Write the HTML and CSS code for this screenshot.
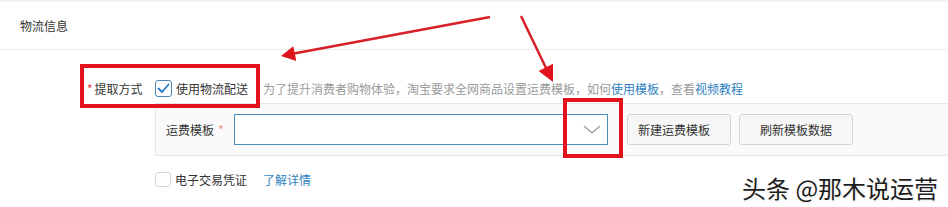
FILE: index.html
```html
<!DOCTYPE html>
<html lang="zh-CN">
<head>
<meta charset="utf-8">
<title>物流信息</title>
<link rel="stylesheet" href="styles.css">
</head>
<body>
<div class="page">
  <div class="topband"></div>
  <div class="section-head">物流信息</div>
  <div class="form">
    <div class="row row-method">
      <div class="label"><span class="req">*</span>提取方式</div>
      <label class="check">
        <span class="box box-checked">
          <svg width="13" height="11" viewBox="0 0 13 11"><path d="M1.5 5.5 L5 9 L11.5 1.5" fill="none" stroke="#2a78c2" stroke-width="1.8" stroke-linecap="round" stroke-linejoin="round"/></svg>
        </span>
        <span class="check-text">使用物流配送</span>
      </label>
      <span class="hint">为了提升消费者购物体验，淘宝要求全网商品设置运费模板，如何<a class="link">使用模板</a>，查看<a class="link">视频教程</a></span>
    </div>
    <div class="panel">
      <div class="panel-label">运费模板<span class="req req-light">*</span></div>
      <div class="select">
        <svg class="chevron" width="18" height="9" viewBox="0 0 18 9"><path d="M1 1 L9 8 L17 1" fill="none" stroke="#9a9a9a" stroke-width="1.3"/></svg>
      </div>
      <button class="btn btn-new">新建运费模板</button>
      <button class="btn btn-refresh">刷新模板数据</button>
    </div>
    <div class="row row-e">
      <label class="check">
        <span class="box box-empty"></span>
        <span class="check-text">电子交易凭证</span>
      </label>
      <a class="link link-more">了解详情</a>
    </div>
  </div>

  <div class="mark mark-1"></div>
  <div class="mark mark-2"></div>
  <svg class="arrows" width="948" height="207" viewBox="0 0 948 207">
    <line x1="490" y1="17" x2="294" y2="53.5" stroke="#d61f26" stroke-width="2.5"/>
    <polygon points="281,56 296.3,61 293.3,46.2" fill="#e0141c"/>
    <line x1="521" y1="16" x2="546" y2="68" stroke="#d61f26" stroke-width="2.5"/>
    <polygon points="553,82 553,63.8 538.6,71" fill="#e0141c"/>
  </svg>
  <div class="watermark">头条 @那木说运营</div>
</div>
</body>
</html>
```

FILE: styles.css
```css
html, body {
  margin: 0;
  padding: 0;
  background: #fff;
}
body {
  font-family: "Noto Sans CJK SC", "Noto Sans", sans-serif;
  font-size: 12px;
  color: #333;
}
.page {
  position: relative;
  width: 948px;
  height: 207px;
  overflow: hidden;
}
.topband {
  height: 2px;
  background: #f2f2f2;
}
.section-head {
  height: 47px;
  line-height: 47px;
  padding-left: 20px;
  border-bottom: 1px solid #ececec;
  color: #333;
}
.row {
  display: flex;
  align-items: center;
  line-height: 17px;
}
.row-method {
  margin-top: 30px;
  height: 17px;
  padding-left: 87px;
}
.label {
  width: 68px;
  white-space: nowrap;
}
.req {
  color: #e4393c;
  margin-right: 2px;
}
.req-light {
  color: #f08a8c;
  margin-left: 4px;
}
.check {
  display: flex;
  align-items: center;
}
.box {
  box-sizing: border-box;
  display: flex;
  align-items: center;
  justify-content: center;
  border-radius: 3px;
  background: #fff;
}
.box-checked {
  width: 17px;
  height: 17px;
  border: 1px solid #4f86b4;
  margin-right: 4px;
}
.box-empty {
  width: 16px;
  height: 15px;
  border: 1px solid #d6d6d6;
  margin-right: 4px;
}
.hint {
  margin-left: 15px;
  color: #9a9a9a;
  white-space: nowrap;
}
.link {
  color: #2f7fc0;
  text-decoration: none;
}
.panel {
  box-sizing: border-box;
  margin-top: 6px;
  margin-left: 155px;
  height: 53px;
  padding: 9px 0 10px 10px;
  background: #fafafa;
  border: 1px solid #e6e6e6;
  border-right: none;
  display: flex;
  align-items: center;
}
.panel-label {
  width: 68px;
  white-space: nowrap;
  color: #333;
}
.select {
  box-sizing: border-box;
  width: 374px;
  height: 31px;
  border: 1px solid #4a8db7;
  background: #fff;
  display: flex;
  align-items: center;
  justify-content: flex-end;
  padding-right: 6px;
}
.chevron {
  display: block;
}
.btn {
  box-sizing: border-box;
  height: 31px;
  border: 1px solid #d3d3d3;
  border-radius: 3px;
  background: #f6f6f6;
  font-family: "Noto Sans CJK SC", "Noto Sans", sans-serif;
  font-size: 12px;
  color: #333;
  padding: 0;
  text-align: left;
}
.btn-new {
  width: 104px;
  margin-left: 19px;
  padding-left: 10px;
}
.btn-refresh {
  width: 114px;
  margin-left: 8px;
  padding-left: 20px;
}
.row-e {
  margin-top: 16px;
  margin-left: 155px;
  height: 15px;
}
.link-more {
  margin-left: 16px;
}
.mark {
  position: absolute;
  box-sizing: border-box;
  border: 4px solid #e3131b;
}
.mark-1 {
  left: 80px;
  top: 64px;
  width: 180px;
  height: 44px;
}
.mark-2 {
  left: 563px;
  top: 98px;
  width: 60px;
  height: 60px;
}
.arrows {
  position: absolute;
  left: 0;
  top: 0;
  pointer-events: none;
}
.watermark {
  position: absolute;
  left: 742px;
  top: 172px;
  font-size: 24px;
  line-height: 32px;
  color: #1c1c1c;
  white-space: nowrap;
  text-shadow: 1px 1px 0 #fff, 1px 1px 1px rgba(0,0,0,0.25);
}
```
